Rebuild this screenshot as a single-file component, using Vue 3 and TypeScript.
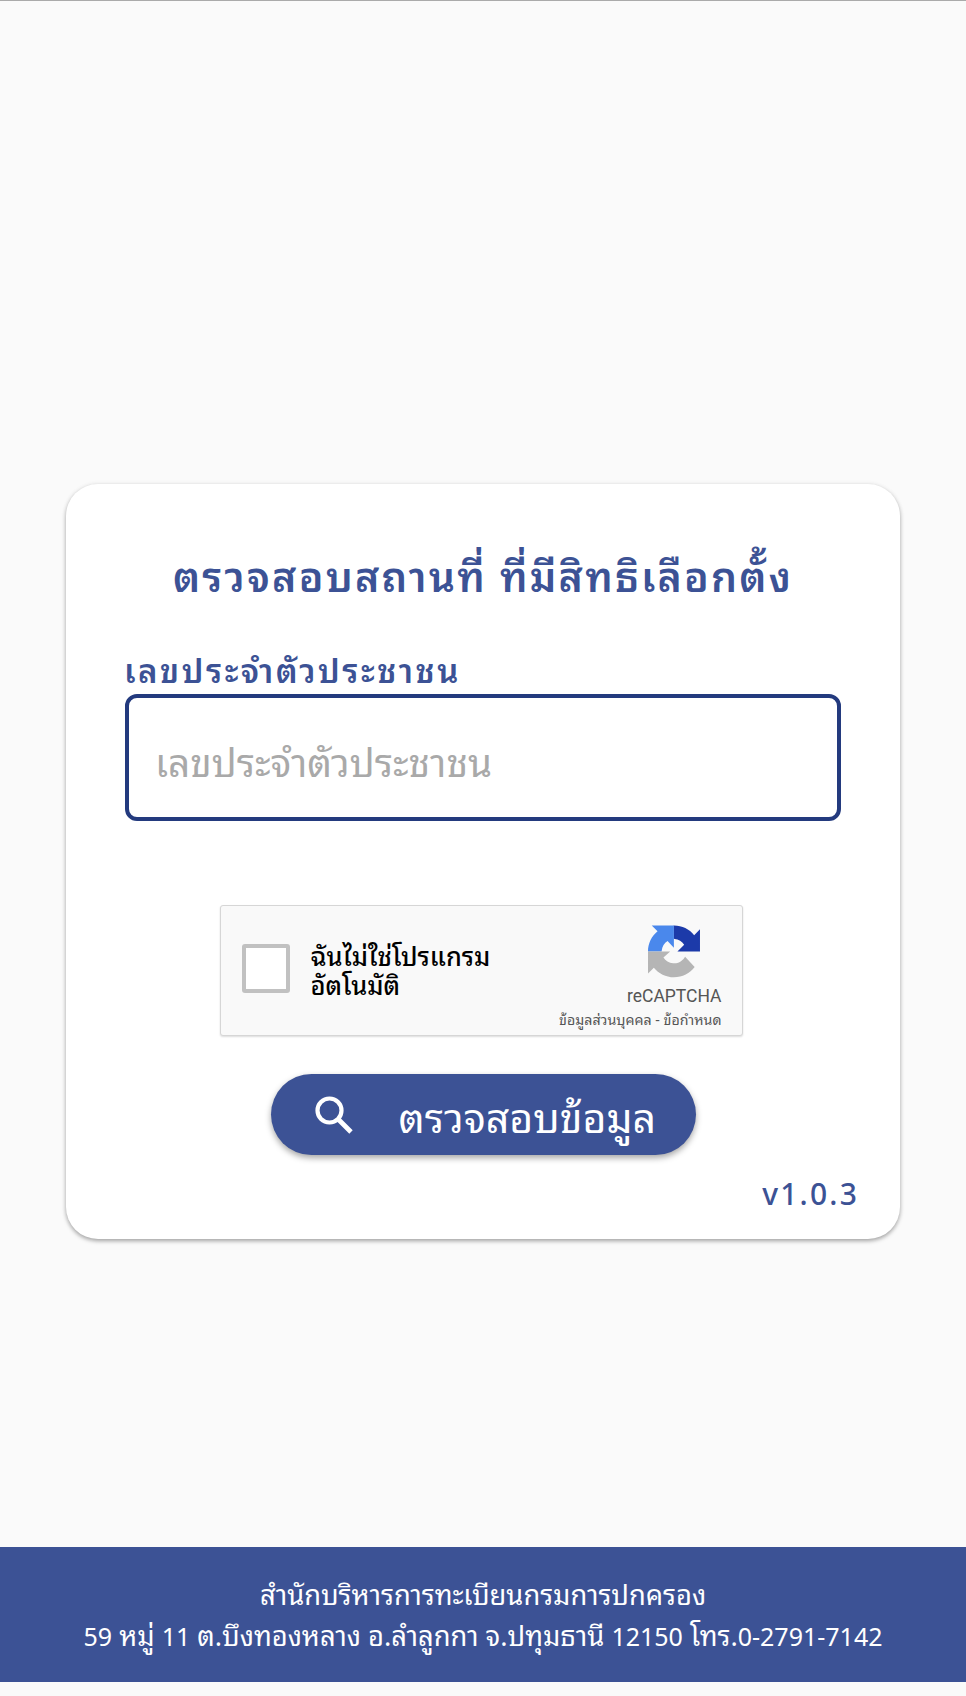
<script setup lang="ts">
const title = 'ตรวจสอบสถานที่ ที่มีสิทธิเลือกตั้ง'
const idLabel = 'เลขประจำตัวประชาชน'
</script>

<template>
  <div class="page">
    <main class="main">
      <section class="card">
        <h1 class="title">{{ title }}</h1>
        <label class="label" for="cid">{{ idLabel }}</label>
        <input id="cid" class="input" type="text" :placeholder="idLabel" />
        <div class="captcha">
          <span class="check"></span>
          <span class="captcha-text">ฉันไม่ใช่โปรแกรม<br />อัตโนมัติ</span>
          <div class="brand">
            <svg class="logo" viewBox="0 0 64 64" aria-hidden="true">
              <path d="M64 31.955l-.033-1.37V4.687l-7.16 7.16C50.948 4.674 42.033.093 32.05.093c-.5 0-.5 0-.5 0v16.3c.485 0 .86.057 1.135.163 4.976.393 9.288 3.14 11.828 7.124l-8.307 8.307 27.794-.032" fill="#1c3aa9" />
              <path d="M31.862 0l-1.37.033H4.594l7.16 7.16C4.58 13.052 0 21.967 0 31.95h16.76c0-.485.057-.86.163-1.135.393-4.976 3.14-9.288 7.124-11.828l7.815 8.307V0" fill="#4a88ec" />
              <path d="M.001 31.955l.033 1.37v25.898l7.16-7.16c5.86 7.173 14.774 11.754 24.76 11.754 10.4 0 19.622-4.96 25.458-12.64L45.676 38.32a15.55 15.55 0 0 1-4.754 5.334c-2.05 1.6-4.952 2.906-8.968 2.906-.485 0-.86-.057-1.135-.163-4.976-.393-9.288-3.14-11.828-7.124l8.307-7.3-27.296-.007" fill="#b5b5b5" />
            </svg>
            <span class="brand-name">reCAPTCHA</span>
            <span class="brand-links">ข้อมูลส่วนบุคคล - ข้อกำหนด</span>
          </div>
        </div>
        <button class="search" type="button">
          <svg class="search-icon" viewBox="0 0 40 40" aria-hidden="true">
            <circle cx="15.5" cy="15.5" r="12" fill="none" stroke="#fff" stroke-width="4.2" />
            <path d="M24.5 24.5 37 37" stroke="#fff" stroke-width="4.8" fill="none" />
          </svg>
          <span>ตรวจสอบข้อมูล</span>
        </button>
        <div class="version">v1.0.3</div>
      </section>
    </main>
    <footer class="footer">
      <p>สำนักบริหารการทะเบียนกรมการปกครอง</p>
      <p><span class="num">59</span> หมู่ <span class="num">11</span> ต.บึงทองหลาง อ.ลำลูกกา จ.ปทุมธานี <span class="num">12150</span> โทร.<span class="num">0-2791-7142</span></p>
    </footer>
  </div>
</template>

<style>
html, body { margin: 0; background: #fafafa; }
</style>

<style scoped>
.page {
  height: 1696px;
  box-sizing: border-box;
  border-top: 1px solid #aaa;
  padding-bottom: 14px;
  display: flex;
  flex-direction: column;
  font-family: "Noto Sans", "Noto Sans Thai Looped", sans-serif;
  color: #3c5295;
}
.main { flex: 1; padding: 483px 66px 0; }
.card {
  height: 755px;
  box-sizing: border-box;
  background: #fff;
  border-radius: 32px;
  box-shadow: 0 2px 4px rgba(0,0,0,.35), 0 0 6px rgba(0,0,0,.03);
  padding: 64px 59px 0;
  display: flex;
  flex-direction: column;
}
.title {
  margin: 0;
  font-size: 41px;
  font-weight: 600;
  letter-spacing: 2.2px;
  line-height: 56px;
  text-align: center;
}
.label {
  margin: 44px 0 0 -1px;
  font-size: 33px;
  font-weight: 600;
  letter-spacing: 2.5px;
  line-height: 46px;
}
.input {
  height: 127px;
  box-sizing: border-box;
  border: 4px solid #233a7e;
  border-radius: 12px;
  padding: 9px 26px 0;
  font: inherit;
  font-size: 38.7px;
  background: #fff;
  outline: none;
}
.input::placeholder { color: #a9a9a9; opacity: 1; }
.captcha {
  align-self: center;
  margin: 84px 4px 0 0;
  width: 523px;
  height: 131px;
  box-sizing: border-box;
  background: #f9f9f9;
  border: 1px solid #d6d6d6;
  border-radius: 3px;
  box-shadow: 0 1px 2px rgba(0,0,0,.14);
  display: flex;
  align-items: center;
  padding-left: 21px;
  position: relative;
}
.check {
  width: 48px;
  height: 49px;
  margin-bottom: 4px;
  box-sizing: border-box;
  background: #fff;
  border: 4px solid #c1c1c1;
  border-radius: 3px;
}
.captcha-text {
  margin-left: 21px;
  font-size: 25.4px;
  line-height: 29px;
  font-weight: 500;
  color: #000;
}
.brand {
  position: absolute;
  right: 20px;
  top: 19px;
  display: flex;
  flex-direction: column;
  align-items: flex-end;
}
.logo { width: 52px; height: 53px; margin-right: 22px; }
.brand-name {
  font-family: Roboto, sans-serif;
  font-size: 17.5px;
  line-height: 20px;
  margin-top: 8px;
  color: #555;
}
.brand-links {
  font-size: 14.2px;
  line-height: 20px;
  margin-top: 4px;
  color: #555;
}
.search {
  align-self: center;
  margin-top: 38px;
  width: 425px;
  height: 81px;
  border: 0;
  border-radius: 41px;
  background: #3c5295;
  color: #fff;
  font: inherit;
  font-size: 41px;
  box-shadow: 0 3px 6px rgba(0,0,0,.35);
  display: flex;
  align-items: center;
  padding: 0 0 0 43px;
  box-sizing: border-box;
}
.search-icon { width: 40px; height: 40px; margin-right: 45px; flex: none; }
.version {
  align-self: flex-end;
  margin: 19px -18px 0 0;
  font-size: 30px;
  font-weight: 500;
  letter-spacing: 2.2px;
  line-height: 40px;
}
.footer {
  height: 135px;
  box-sizing: border-box;
  background: #3c5295;
  color: #fff;
  text-align: center;
  font-size: 27.3px;
  line-height: 40.5px;
  padding-top: 28px;
}
.footer p { margin: 0; }
.num { font-size: 25px; }
</style>
